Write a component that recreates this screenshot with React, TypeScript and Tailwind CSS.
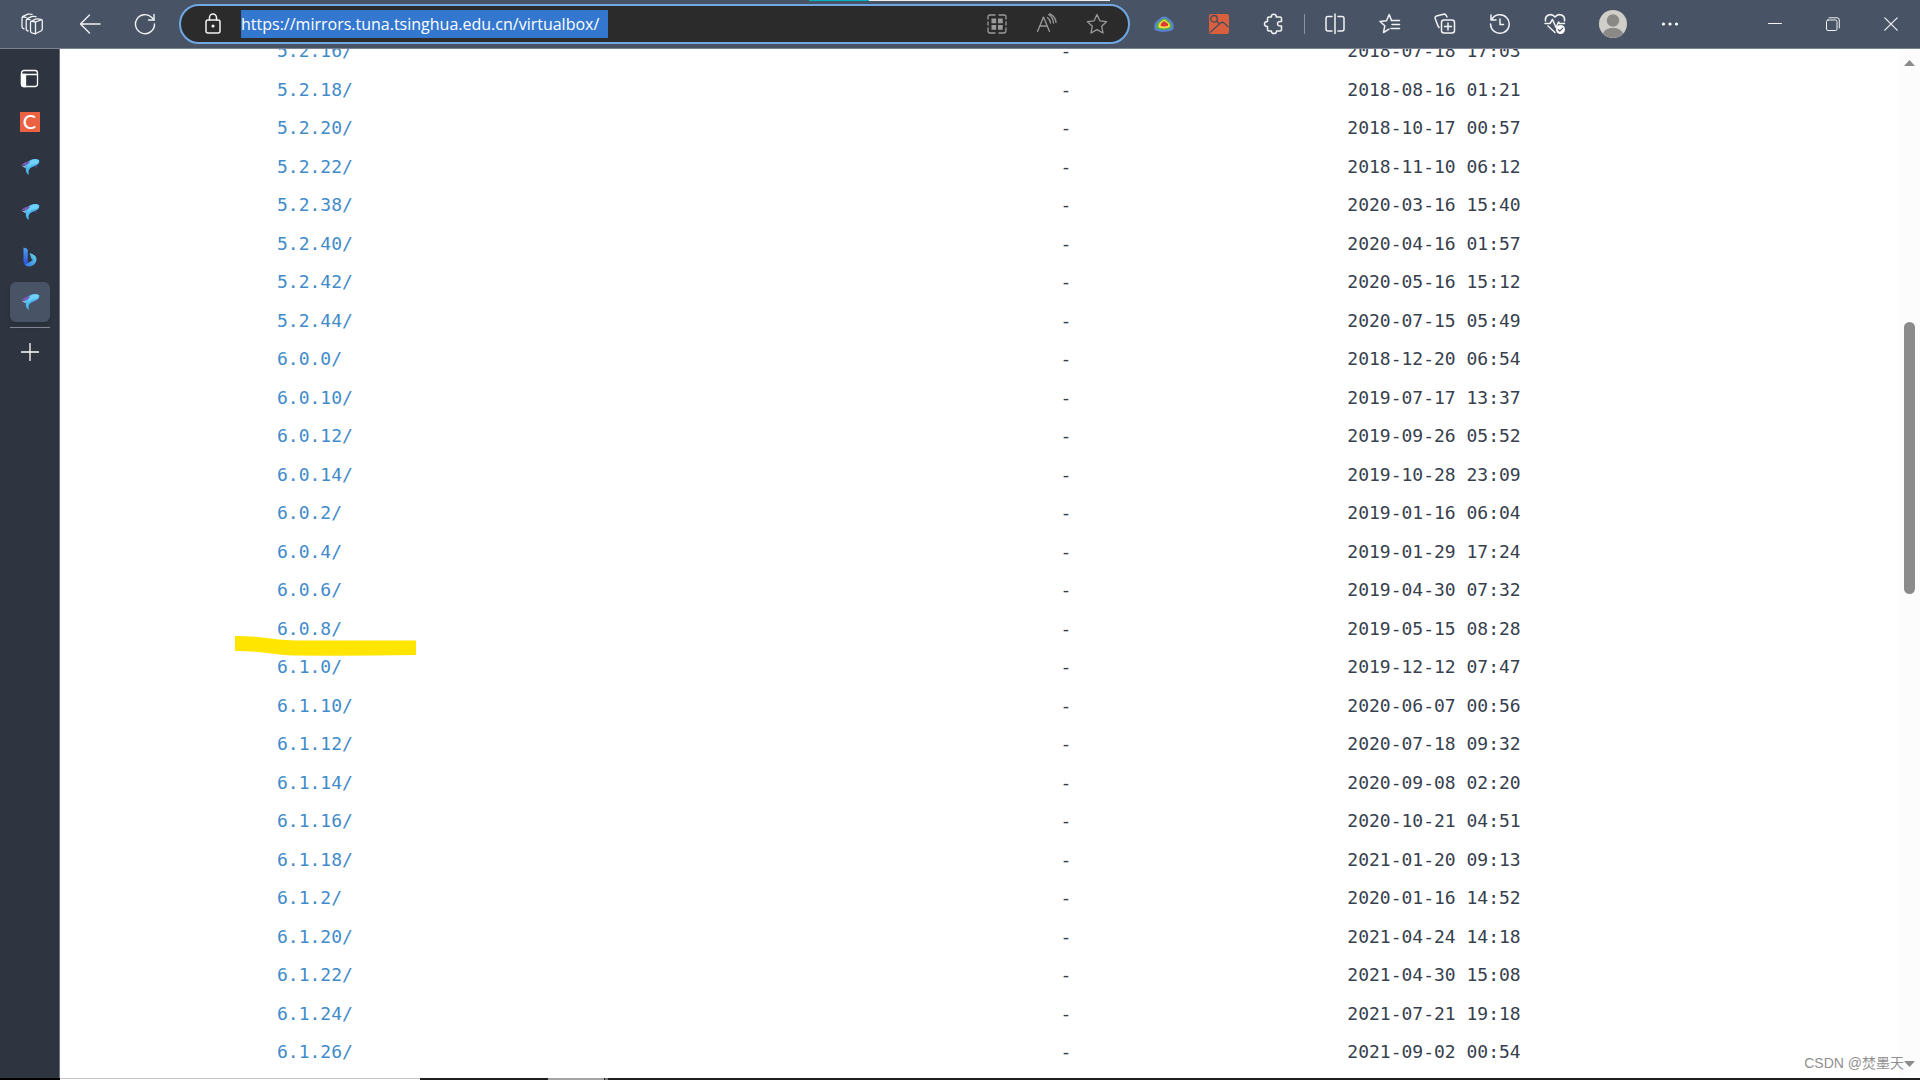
import type { ReactNode } from 'react';

const entries: [string, string][] = [
  ['5.2.16/', '2018-07-18 17:03'],
  ['5.2.18/', '2018-08-16 01:21'],
  ['5.2.20/', '2018-10-17 00:57'],
  ['5.2.22/', '2018-11-10 06:12'],
  ['5.2.38/', '2020-03-16 15:40'],
  ['5.2.40/', '2020-04-16 01:57'],
  ['5.2.42/', '2020-05-16 15:12'],
  ['5.2.44/', '2020-07-15 05:49'],
  ['6.0.0/', '2018-12-20 06:54'],
  ['6.0.10/', '2019-07-17 13:37'],
  ['6.0.12/', '2019-09-26 05:52'],
  ['6.0.14/', '2019-10-28 23:09'],
  ['6.0.2/', '2019-01-16 06:04'],
  ['6.0.4/', '2019-01-29 17:24'],
  ['6.0.6/', '2019-04-30 07:32'],
  ['6.0.8/', '2019-05-15 08:28'],
  ['6.1.0/', '2019-12-12 07:47'],
  ['6.1.10/', '2020-06-07 00:56'],
  ['6.1.12/', '2020-07-18 09:32'],
  ['6.1.14/', '2020-09-08 02:20'],
  ['6.1.16/', '2020-10-21 04:51'],
  ['6.1.18/', '2021-01-20 09:13'],
  ['6.1.2/', '2020-01-16 14:52'],
  ['6.1.20/', '2021-04-24 14:18'],
  ['6.1.22/', '2021-04-30 15:08'],
  ['6.1.24/', '2021-07-21 19:18'],
  ['6.1.26/', '2021-09-02 00:54'],
];

const MARKED = '6.0.8/';

function Icon({ children, size = 22, width = 1.3 }: { children: ReactNode; size?: number; width?: number }) {
  return (
    <svg
      width={size}
      height={size}
      viewBox={`0 0 ${size} ${size}`}
      fill="none"
      stroke="currentColor"
      strokeWidth={width}
      strokeLinecap="round"
      strokeLinejoin="round"
      aria-hidden="true"
    >
      {children}
    </svg>
  );
}

function BarButton({ label, className, children }: { label: string; className: string; children: ReactNode }) {
  return (
    <button type="button" aria-label={label} className={`flex h-full shrink-0 items-center justify-center ${className}`}>
      {children}
    </button>
  );
}

function MirrorIcon() {
  return (
    <svg width="20" height="18" viewBox="0 0 20 18" aria-hidden="true">
      <path d="M7 4.500 C10 1 16 0 19 2 C20 4 18.500 6.500 16 7.500 C13.500 8.500 11 9 9.500 11 C8.300 13 8.300 14 9 17 C6.500 15.500 5.500 13 5.800 10.500 C4 8.500 4.500 6 7 4.500 Z" fill="#4bb8ee" />
      <path d="M10 3 C13 1 17 .8 18.800 2.500 C19.300 4.500 17 6.200 14 6.200 C11 6.500 9 8 7 10 Z" fill="#6fd0f8" />
      <path d="M1 8 C3 4.500 6 3.300 10 3.400 C9 6 6 7 1 8 Z" fill="#7d57b4" />
      <path d="M15.300 8 L16.700 7.300 L16.600 10.500 C15.800 10 15.400 9 15.300 8 Z" fill="#5b3f92" />
      <path d="M2 8.600 C3 8 4.500 8 5.500 8.500 L5 9.700 C4 9 3 8.900 2 8.600 Z" fill="#cfd3e2" />
    </svg>
  );
}

function Toolbar() {
  return (
    <header className="relative flex h-[49px] shrink-0 items-stretch border-b border-[#7a8292] bg-[#485466] text-[#f1f2f4]">
      {/* sliver of the window behind */}
      <div className="absolute left-[809px] top-0 flex h-px w-[301px]" aria-hidden="true">
        <span className="w-[60px] bg-[#00b4c4]" />
        <span className="flex-1 bg-[#f0f0ee]" />
      </div>

      <BarButton label="Workspaces" className="w-16">
        <Icon>
          <path d="M9.500 9.500 Q9.500 8.200 11 8.400 L14.500 9 V20.800 L10.800 19.800 Q9.500 19.400 9.500 18 Z" />
          <path d="M10.300 8.300 L14.500 6.200 Q15.300 5.800 16.300 5.900 L20 6.300 Q21.300 6.600 21.300 8 V16 Q21.300 17 20.300 17.700 L14.500 20.800 M14.500 9 L20.800 6.700" />
          <path d="M7 18 Q5.200 17.500 5.200 16 V7.500 Q5.200 6.300 6.200 5.700 L10.500 3.600 Q11.500 3.200 12.500 3.300 L15 3.600 M5.800 6.200 L9 6.600" />
          <path d="M3 15.800 Q1 15.300 1 13.800 V5.300 Q1 4 2 3.400 L6.300 1.300 Q7.300 .8 8.300 1 L11 1.400 M1.600 3.900 L5 4.400" />
        </Icon>
      </BarButton>
      <BarButton label="Back" className="w-[52px]">
        <Icon width={1.4}>
          <path d="M21 11 H1.500 M10.500 2 L1.500 11 L10.500 20" />
        </Icon>
      </BarButton>
      <BarButton label="Refresh" className="w-[58px]">
        <Icon width={1.4}>
          <path d="M20.500 11 A9.500 9.500 0 1 1 17.800 4.500 L20 7" />
          <path d="M20 1.500 V7 H14.500" />
        </Icon>
      </BarButton>

      <div className="my-1 ml-[5px] flex min-w-0 flex-1 items-center rounded-full border-2 border-[#70a8e3] bg-[#2b2b2b]">
        <button type="button" aria-label="View site information" className="flex h-full w-[60px] shrink-0 items-center justify-center pl-[3px]">
          <Icon width={1.5}>
            <rect x="4" y="7" width="14" height="13" rx="2" />
            <path d="M7.500 7 V4.500 A3.500 3.500 0 0 1 14.500 4.500 V7" />
            <circle cx="11" cy="13" r=".8" fill="currentColor" />
          </Icon>
        </button>
        <input
          type="text"
          aria-label="Address"
          defaultValue="https://mirrors.tuna.tsinghua.edu.cn/virtualbox/"
          className="h-7 w-[367px] bg-[#3477cf] font-['Open_Sans','Noto_Sans',sans-serif] text-[16px] leading-7 text-white outline-none"
        />
        <div className="ml-auto mr-[6px] flex h-full text-[#9a9a9a]">
          <BarButton label="Apps" className="w-[51px]">
            <Icon>
              <path d="M2 6 V4 Q2 2 4 2 H9 M13 2 H18 Q20 2 20 4 V6 M20 15 V17 Q20 20 18 20 H13 M9 20 H4 Q2 20 2 18 V15 M2 9 V12 M20 9 V12" />
              <path d="M5.500 5.500 H10.200 V10.200 H5.500 Z M12 5.500 H16.700 V10.200 H12 Z M5.500 12 H10.200 V16.700 H5.500 Z M12 12 H16.700 V16.700 H12 Z" fill="currentColor" stroke="none" />
            </Icon>
          </BarButton>
          <BarButton label="Read aloud" className="w-[50px]">
            <Icon>
              <path d="M1.500 18.500 L7.500 4 L13.500 18.500 M3.800 13 H11.200" />
              <path d="M11.500 4.500 Q14 6.500 14.500 10 M12.500 1.500 Q17 4 17.500 10 M14 .8 Q19.500 3.500 20 9.500" />
            </Icon>
          </BarButton>
          <BarButton label="Add to favorites" className="w-[50px]">
            <Icon>
              <path d="M11 1.500 L13.900 7.800 L20.700 8.600 L15.700 13.200 L17 20 L11 16.600 L5 20 L6.300 13.200 L1.300 8.600 L8.100 7.800 Z" />
            </Icon>
          </BarButton>
        </div>
      </div>

      <div className="ml-[6px] flex shrink-0">
        <BarButton label="Weather" className="w-[55px]">
          <svg width="20" height="16" viewBox="0 0 20 16" aria-hidden="true">
            <path d="M6 2.500 C8 -.3 13 -.5 15 3 C19 5 20.500 9 19.500 13 C17 16.500 4 16.500 1 14 C-.8 11 0 6 6 2.500 Z" fill="#5b7fd6" />
            <path d="M7 4 C9 1.500 12.500 1.500 14 4.500 C17 6 18.500 9 17.500 12 C15 14.500 5 14.500 2.500 12.500 C1.500 10 2.500 6.500 7 4 Z" fill="#4fae54" />
            <path d="M8 5 C9.500 3.300 12 3.300 13 5.800 C15.500 7 16.500 9 15.800 11 C13 12.800 7 12.800 4.500 11.200 C4 9 5 6.500 8 5 Z" fill="#f3dc3c" />
            <path d="M9 5.800 C10 4.800 11.500 4.800 12.300 6.800 C14 7.500 14.500 8.700 14 9.800 C12 10.800 8.500 10.800 6.500 9.800 C6.500 8.300 7.500 6.800 9 5.800 Z" fill="#dc3a34" />
          </svg>
        </BarButton>
        <BarButton label="Image tools" className="w-[55px]">
          <svg width="20" height="20" viewBox="0 0 20 20" fill="none" aria-hidden="true">
            <rect width="20" height="20" rx="2" fill="#d9603f" />
            <g stroke="#454c5c" strokeWidth="1.300">
              <circle cx="5" cy="4.800" r="3.300" />
              <path d="M7.500 7 L10.500 10 M1 18.500 L11.500 9 Q13.500 7.500 15 9 L19.500 13" />
            </g>
          </svg>
        </BarButton>
        <BarButton label="Extensions" className="w-[55px]">
          <Icon width={1.5}>
            <path d="M6 4 H8.500 Q8 1.200 10.800 1.200 Q13.600 1.200 13.200 4 H17 Q18.500 4 18.500 5.500 V8.500 Q14.500 8 14.500 10.800 Q14.500 13.500 18.500 13 V16.500 Q18.500 18 17 18 H13.500 Q13.600 20.500 11 20.500 Q8.400 20.500 8.500 18 H6 Q4.500 18 4.500 16.500 V13.500 Q1.500 13.600 1.500 11 Q1.500 8.400 4.500 8.500 V5.500 Q4.500 4 6 4 Z" />
          </Icon>
        </BarButton>
        <span className="flex w-[6px] items-center justify-center">
          <span className="h-5 w-px bg-[#8c94a1]" />
        </span>
        <BarButton label="Split screen" className="w-[55px]">
          <Icon width={1.5}>
            <path d="M8 3.500 H4 Q2 3.500 2 5.500 V16 Q2 18 4 18 H8 M14 3.500 H18 Q20 3.500 20 5.500 V16 Q20 18 18 18 H14 M11 1 V20.500" />
          </Icon>
        </BarButton>
        <BarButton label="Favorites" className="w-[55px]">
          <Icon width={1.5}>
            <path d="M12.500 7.500 L10.200 1.500 L7.500 7.700 L1 8.500 L5.800 12.800 L4.500 19.500 L10 16.200" />
            <path d="M12.500 7.500 H20.500 M13 11.500 H20.500 M12 15.500 H20.500" />
          </Icon>
        </BarButton>
        <BarButton label="Collections" className="w-[55px]">
          <Icon width={1.5}>
            <rect x="7.500" y="7" width="13" height="13" rx="2.500" />
            <path d="M14 10 V17 M10.500 13.500 H17.500" />
            <path d="M5 14.500 L3.800 12.500 L1.200 5.500 Q.7 3.700 2.500 3 L9.500 1.200 Q11.500 .8 12.300 2.500 L13 4" />
          </Icon>
        </BarButton>
        <BarButton label="History" className="w-[55px]">
          <Icon width={1.5}>
            <path d="M2.500 7 A9.300 9.300 0 1 1 1.600 11 M2 2 V7 H7 M11 6 V11.500 H14.500" />
          </Icon>
        </BarButton>
        <BarButton label="Browser essentials" className="w-[55px]">
          <Icon width={1.5}>
            <path d="M1.500 8 C.5 2 7.500 -.5 11 4 C14.500 -.5 21.500 2 20.500 8 M1 10.500 H6 L8.500 6.500 L12 14.500 L14.500 9 L15.500 10.500 H20.500 M4 13 L11 19.500" />
            <circle cx="16.500" cy="16.500" r="4.500" fill="#fff" stroke="none" />
            <path d="M14.300 16.700 L15.800 18.200 L18.700 15.200" stroke="#485466" strokeWidth="1.200" />
          </Icon>
        </BarButton>
        <BarButton label="Profile" className="w-[62px]">
          <svg width="28" height="28" viewBox="0 0 28 28" aria-hidden="true">
            <circle cx="14" cy="14" r="14" fill="#d0cec9" />
            <circle cx="14" cy="10.500" r="6.200" fill="#8a8986" />
            <path d="M4 23.500 C6 16 22 16 24 23.500 A14 14 0 0 1 4 23.500 Z" fill="#8a8986" />
          </svg>
        </BarButton>
        <BarButton label="Settings and more" className="w-[52px]">
          <svg width="18" height="4" viewBox="0 0 18 4" fill="#fff" aria-hidden="true">
            <circle cx="2.500" cy="2" r="1.600" />
            <circle cx="9" cy="2" r="1.600" />
            <circle cx="15.500" cy="2" r="1.600" />
          </svg>
        </BarButton>
      </div>

      <div className="ml-[50px] flex shrink-0">
        <BarButton label="Minimize" className="w-[58px]">
          <Icon size={14} width={1}>
            <path d="M.5 6.500 H13.500" />
          </Icon>
        </BarButton>
        <BarButton label="Restore" className="w-[58px]">
          <Icon size={14} width={1}>
            <rect x=".5" y="3" width="10.500" height="10.500" rx="1.500" />
            <path d="M3 .8 H11 Q13.300 .8 13.300 3 V11" />
          </Icon>
        </BarButton>
        <BarButton label="Close" className="w-[58px]">
          <Icon size={14} width={1.2}>
            <path d="M.8 .8 L13.200 13.200 M13.200 .8 L.8 13.200" />
          </Icon>
        </BarButton>
      </div>
    </header>
  );
}

function Sidebar() {
  const tab = 'flex h-[45px] w-10 items-center justify-center';
  return (
    <nav aria-label="Vertical tabs" className="flex w-[60px] shrink-0 flex-col items-center border-r border-[#6d7480] bg-[#2e3540] pt-2 text-white">
      <button type="button" aria-label="Tab actions" className="flex h-[42px] w-10 items-center justify-center">
        <Icon size={20} width={1.3}>
          <rect x="1.500" y="2.500" width="16" height="16" rx="2.500" />
          <path d="M1.500 6.500 H17.500" />
          <path d="M1.500 6.500 H5.500 V18.500 H3.500 Q1.500 18.500 1.500 16.500 Z" fill="#fff" />
        </Icon>
      </button>
      <button type="button" aria-label="CSDN" className={tab}>
        <span className="flex size-5 justify-center bg-[#eb6142] font-['Lato',sans-serif] text-[20px] leading-[18px] font-medium">C</span>
      </button>
      <button type="button" aria-label="Mirror tab 1" className={tab}>
        <MirrorIcon />
      </button>
      <button type="button" aria-label="Mirror tab 2" className={tab}>
        <MirrorIcon />
      </button>
      <button type="button" aria-label="Bing" className={tab}>
        <svg width="14" height="20" viewBox="0 0 14 20" aria-hidden="true">
          <defs>
            <linearGradient id="bingStem" x1="0" y1="0" x2="0" y2="1">
              <stop offset="0" stopColor="#4fa3ee" />
              <stop offset="1" stopColor="#2b50dc" />
            </linearGradient>
            <linearGradient id="bingBowl" x1="0" y1="1" x2="1" y2="0">
              <stop offset="0" stopColor="#2f6fe8" />
              <stop offset="1" stopColor="#63dbe8" />
            </linearGradient>
          </defs>
          <path d="M6.500 6 Q13.500 8 13.500 12.500 Q13 18 7 19.500 Q3 20 1 16.500 Q4 17 6 15.500 L10 13 L8.500 12 Z" fill="url(#bingBowl)" />
          <path d="M.5 .5 L3.500 1.500 Q4.800 2 4.800 3.500 V15.500 Q3.500 18 1.500 17 Q.5 16 .5 14.500 Z" fill="url(#bingStem)" />
        </svg>
      </button>
      <button type="button" aria-label="Mirror tab 3" aria-current="page" className="mt-[3px] flex size-10 items-center justify-center rounded-md bg-[#485466] shadow-md">
        <MirrorIcon />
      </button>
      <span className="mt-[5px] h-px w-10 bg-[#818791]" />
      <button type="button" aria-label="New tab" className="mt-1 flex size-10 items-center justify-center">
        <Icon size={18} width={1.3}>
          <path d="M9 .5 V17.500 M.5 9 H17.500" />
        </Icon>
      </button>
    </nav>
  );
}

function Listing() {
  return (
    <main className="min-w-0 flex-1 overflow-hidden px-[217px]">
      <table className="-mt-[17px] w-full table-fixed font-['DejaVu_Sans_Mono',monospace] text-[18px] leading-6 text-[#36404d]">
        <colgroup>
          <col />
          <col className="w-[240px]" />
          <col className="w-[496px]" />
        </colgroup>
        <tbody>
          {entries.map(([name, date]) => (
            <tr key={name} className="odd:h-[38px] even:h-[39px]">
              <td className="relative p-0">
                <a href={name} className="text-[#428bca]">{name}</a>
                {name === MARKED && (
                  <svg className="absolute -left-[42px] top-[27px]" width="181" height="20" viewBox="0 0 181 20" aria-hidden="true">
                    <path d="M0 0 Q20 0 36 2.500 Q50 4.500 70 4.500 H181 V19 Q110 20 60 19.500 Q48 19 32 17 Q16 15 0 15 Z" fill="#ffe500" />
                  </svg>
                )}
              </td>
              <td className="p-0 text-center">-</td>
              <td className="p-0 text-center">{date}</td>
            </tr>
          ))}
        </tbody>
      </table>
    </main>
  );
}

function Scrollbar() {
  return (
    <div className="flex w-[21px] shrink-0 flex-col items-center bg-[#fcfcfc] py-[11px]" aria-hidden="true">
      <svg width="11" height="6" viewBox="0 0 11 6" fill="#8b8b8b">
        <path d="M5.500 0 L11 6 H0 Z" />
      </svg>
      <span className="mt-64 h-[272px] w-[11px] rounded-full bg-[#8b8b8b]" />
      <svg className="mt-auto" width="11" height="6" viewBox="0 0 11 6" fill="#8b8b8b">
        <path d="M5.500 6 L11 0 H0 Z" />
      </svg>
    </div>
  );
}

export default function App() {
  return (
    <div className="relative flex h-screen flex-col overflow-hidden bg-white">
      <Toolbar />
      <div className="flex min-h-0 flex-1">
        <Sidebar />
        <Listing />
        <Scrollbar />
      </div>
      {/* top edge of the taskbar */}
      <div className="flex h-[2px] shrink-0 bg-[#1f1d1f]" aria-hidden="true">
        <span className="w-[60px] bg-black" />
        <span className="w-[360px] border-t border-[#c4c4c4] bg-white" />
        <span className="ml-32 w-[56px] bg-[#a3a3a3]" />
        <span className="ml-px w-[3px] bg-[#777777]" />
      </div>
      <p className="absolute bottom-[7px] right-4 font-['Liberation_Sans','Noto_Sans_CJK_SC',sans-serif] text-[14px] leading-5 text-[#8f8f8f]">
        CSDN @焚墨天
      </p>
    </div>
  );
}
